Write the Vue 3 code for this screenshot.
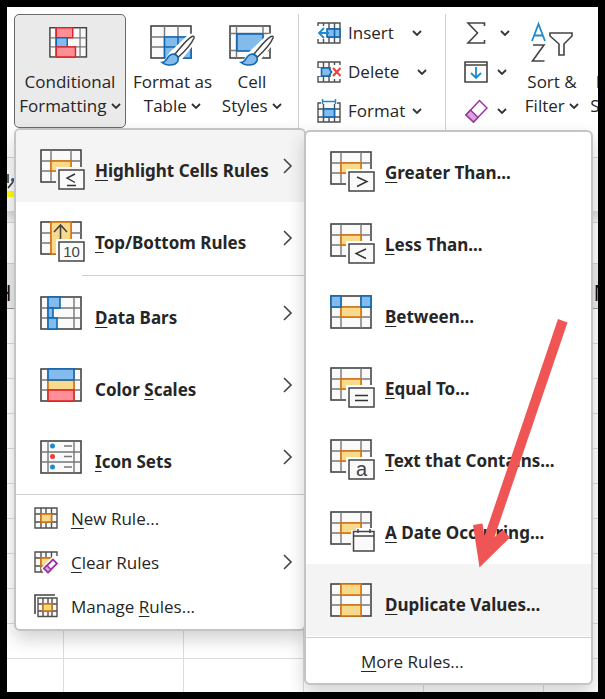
<template>
  <main class="window">
    <header class="ribbon">
      <button v-for="b in styleButtons" :key="b.icon" class="big-button" :class="[b.icon, { active: b.active }]">
        <svg width="46" height="42" viewBox="0 0 46 42">
          <g v-if="b.icon === 'conditional'">
            <rect x="1" y="1" width="40" height="32" class="frame" />
            <path d="M7.5 1V33M21 1V33M34 1V33M1 12H41M1 22H41" class="inner" />
            <path d="M8 13H27V21H8Z" fill="#fafafa" />
            <rect x="8" y="1" width="18" height="11" class="red" />
            <rect x="8" y="12" width="12" height="10" class="blue" />
            <rect x="8" y="22" width="21" height="11" class="red" />
          </g>
          <g v-else>
            <rect x="1" y="1" width="40" height="32" class="frame" />
            <template v-if="b.icon === 'table'">
              <path d="M14.5 1V33M28 1V33M1 12H41M1 22H41" class="inner" />
              <path d="M14.5 12H41V33H14.5Z" class="blue" />
              <path d="M28 12V33M14.5 22H41" class="blue" />
            </template>
            <template v-else>
              <path d="M7.5 1V33M34 1V33M1 8.5H41M1 25.5H41" class="inner" />
              <rect x="8" y="9" width="26" height="17" class="blue" />
            </template>
            <path d="M9 36L15 34L20 27L39 9L46 8V17L33 33L27 42H9Z" fill="#fff" />
            <path d="M25 29C31 22 37 14 42 11.5Q44.5 10.5 44 13C41 20 34 27 28.5 32Z" fill="#fff" stroke="#444" stroke-width="1.5" />
            <path d="M12 37.5C18 37 16 30 23 29C29 30 30 36 25 39C21 41 15 40 12 37.5Z" class="blue" />
          </g>
        </svg>
        <span>{{ b.top }}</span>
        <span>{{ b.bottom }} <svg class="drop" width="10" height="6" viewBox="0 0 10 6"><path d="M1 1L5 5L9 1" /></svg></span>
      </button>

      <div class="separator"></div>

      <div class="stack cells">
        <button v-for="c in cellButtons" :key="c" class="small-button" :class="c.toLowerCase()">
          <svg width="24" height="24" viewBox="0 0 24 24">
            <path v-if="c !== 'Format'" d="M1 2H23V22H1ZM6.5 2V22M12 2V22M17.5 2V22M1 8H23M1 16H23" class="tiny" />
            <template v-if="c === 'Insert'">
              <path d="M0 5H10V18H0Z" fill="#fff" />
              <rect x="10" y="8" width="13" height="8" class="blue" />
              <path d="M17.5 8V16" class="blue" />
              <path d="M12 12H2M7 7L2 12L7 17" stroke="#1e8bcd" stroke-width="1.8" fill="none" />
            </template>
            <template v-if="c === 'Delete'">
              <path d="M14 5H24V19H14Z" fill="#fff" />
              <path d="M0 8H4V16H0Z" fill="#fff" />
              <path d="M4.5 8H12L14.5 12L12 16H4.5Z" class="blue" />
              <path d="M16 8L23.5 16M23.5 8L16 16" stroke="#ef3b3b" stroke-width="2" />
            </template>
            <template v-if="c === 'Format'">
              <path d="M4 4H1V23H23V4H20M6.5 5V23M17.5 5V23M1 10H23M1 18H23M12 18V23" class="tiny" />
              <rect x="6.5" y="10" width="11" height="8" class="blue" />
              <path d="M5.5 0V5M18.5 0V5M5.5 2.5H18.5" stroke="#1e8bcd" stroke-width="1.5" />
            </template>
          </svg>
          <span>{{ c }}</span>
          <svg class="drop" width="10" height="6" viewBox="0 0 10 6"><path d="M1 1L5 5L9 1" /></svg>
        </button>
      </div>

      <div class="separator"></div>

      <div class="stack editing">
        <button v-for="e in editButtons" :key="e" class="small-button" :class="e.toLowerCase()" :aria-label="e">
          <svg width="24" height="24" viewBox="0 0 24 24">
            <path v-if="e === 'AutoSum'" d="M20.5 5V2H4L13.5 12L4 22H20.5V19" class="line" />
            <template v-if="e === 'Fill'">
              <path d="M1 2H23V22H1ZM1 5H23" class="line" />
              <path d="M12 7V18M7 13L12 18L17 13" stroke="#1e8bcd" stroke-width="1.8" fill="none" />
            </template>
            <template v-if="e === 'Clear'">
              <path d="M2 16L15.5 1.5L23 9L9.5 23Z" fill="#fff" stroke="#9a33a0" stroke-width="1.5" />
              <path d="M2 16L6.5 11L14 18.5L9.5 23Z" fill="#d9a3dc" stroke="#9a33a0" stroke-width="1.5" />
            </template>
          </svg>
          <svg class="drop" width="10" height="6" viewBox="0 0 10 6"><path d="M1 1L5 5L9 1" /></svg>
        </button>
      </div>

      <button class="big-button sort">
        <svg width="44" height="42" viewBox="0 0 44 42">
          <path d="M2 16L8.5 -1L15 16M4.5 10.5H12.5" stroke="#1e8bcd" stroke-width="1.8" fill="none" />
          <path d="M3 20H14L2.500 36H14.5" class="line" />
          <path d="M20 8H42V11L34 19V30H29V19L20 11Z" class="line" />
        </svg>
        <span>Sort &amp;</span>
        <span>Filter <svg class="drop" width="10" height="6" viewBox="0 0 10 6"><path d="M1 1L5 5L9 1" /></svg></span>
      </button>
      <button class="big-button find">
        <span>Find &amp;</span>
        <span>Select <svg class="drop" width="10" height="6" viewBox="0 0 10 6"><path d="M1 1L5 5L9 1" /></svg></span>
      </button>
    </header>

    <div class="ribbon-foot">
      <svg width="8" height="26" viewBox="0 0 8 26">
        <path d="M1 2V11M1 16L6 10" stroke="#333" stroke-width="1.5" />
        <circle cx="6" cy="8" r="2" fill="#1664ad" />
        <path d="M0 19H8V25H0Z" fill="#ff0" />
      </svg>
    </div>
    <div class="gap"></div>
    <div class="formula-bar"></div>

    <div class="sheet">
      <table>
        <thead>
          <tr><th v-for="col in columns" :key="col">{{ col }}</th></tr>
        </thead>
        <tbody>
          <tr v-for="row in 11" :key="row"><td v-for="col in columns" :key="col"></td></tr>
        </tbody>
      </table>
    </div>

    <nav class="menu main-menu">
      <template v-for="(item, i) in rules" :key="item.icon">
        <button class="rule" :class="{ hovered: i === 0 }">
          <svg class="rule-icon" width="46" height="42" viewBox="0 0 46 42">
            <rect x="1" y="1" width="40" height="32" class="frame" />
            <template v-if="i < 2">
              <path d="M11 1V33M31 1V33M1 12H41M1 22H41" class="inner" />
              <rect v-if="i === 0" x="11" y="12" width="20" height="10" class="gold" />
              <rect v-else x="11" y="1" width="20" height="32" class="gold" />
              <path v-if="i === 1" d="M20.5 20V4M14 11L20.5 4L27 11" class="line" />
              <rect x="16" y="18" width="30" height="24" :fill="i === 0 ? '#f4f4f4' : '#fff'" />
              <rect x="19" y="21" width="25" height="19" class="badge" />
              <path v-if="i === 0" d="M35 25L27 29L35 33.5M27 36.5H36" class="sign" />
              <text v-else x="31.500" y="36" text-anchor="middle" class="ten">10</text>
            </template>
            <template v-else>
              <path d="M8 1V33M34 1V33M1 12H41M1 22H41" class="inner" />
            </template>
            <template v-if="item.icon === 'bars'">
              <rect x="8" y="1" width="12" height="11" class="blue" />
              <rect x="8" y="12" width="5" height="10" class="blue" />
              <rect x="8" y="22" width="9" height="11" class="blue" />
            </template>
            <template v-if="item.icon === 'scales'">
              <rect x="8" y="12" width="26" height="10" class="gold" />
              <rect x="8" y="1" width="26" height="11" class="blue" />
              <rect x="8" y="22" width="26" height="11" class="red" />
            </template>
            <template v-if="item.icon === 'sets'">
              <circle cx="12.5" cy="6" r="2.5" fill="#1e8bcd" />
              <circle cx="12.5" cy="16.5" r="2.5" fill="#ef3b3b" />
              <circle cx="12.5" cy="27" r="2.5" fill="#1e8bcd" />
              <path d="M24 6H32M24 16.5H32M24 27H32" class="inner" />
            </template>
          </svg>
          <span class="rule-label">{{ item.label[0] }}<u>{{ item.label[1] }}</u>{{ item.label[2] }}</span>
          <svg class="more" width="10" height="16" viewBox="0 0 10 16"><path d="M1 1L8 8L1 15" /></svg>
        </button>
        <hr v-if="i === 1" class="inset">
      </template>
      <hr>
      <div class="commands">
        <button v-for="cmd in commands" :key="cmd.icon" class="command">
          <svg width="24" height="24" viewBox="0 0 24 24">
            <template v-if="cmd.icon !== 'manage'">
              <path d="M1 2H23V22H1ZM7 2V22M12 2V22M17.5 2V22M1 8H23M1 16H23" class="tiny" />
              <rect x="7" y="8" width="10.5" height="8" class="gold" />
            </template>
            <template v-if="cmd.icon === 'clear'">
              <path d="M7 18L19 6H24V24H10Z" fill="#fff" />
              <path d="M10 18.5L19 9.5L23 13.5L14 22.5Z" fill="#fff" stroke="#9a33a0" stroke-width="1.8" />
              <path d="M10 18.5L13 15.5L17 19.5L14 22.5Z" fill="#d9a3dc" stroke="#9a33a0" stroke-width="1.5" />
            </template>
            <template v-if="cmd.icon === 'manage'">
              <path d="M1 20V1H21" class="line" />
              <path d="M4 4H23V22.5H4ZM9 4V22M14 4V22M18 4V22M4 10H23M4 17H23" class="tiny" />
              <rect x="9" y="10" width="9" height="7" class="gold" />
            </template>
          </svg>
          <span>{{ cmd.label[0] }}<u>{{ cmd.label[1] }}</u>{{ cmd.label[2] }}</span>
          <svg v-if="cmd.icon === 'clear'" class="more" width="10" height="16" viewBox="0 0 10 16"><path d="M1 1L8 8L1 15" /></svg>
        </button>
      </div>
    </nav>

    <nav class="menu sub-menu">
      <button v-for="item in highlightRules" :key="item.icon" class="rule" :class="{ hovered: item.icon === 'duplicate' }">
        <svg class="rule-icon" width="46" height="42" viewBox="0 0 46 42">
          <rect x="1" y="1" width="40" height="32" class="frame" />
          <path d="M11 1V33M31 1V33M1 12H41M1 22H41" class="inner" />
          <template v-if="item.icon === 'duplicate'">
            <rect x="11" y="1" width="20" height="11" class="gold" />
            <rect x="11" y="22" width="20" height="11" class="gold" />
          </template>
          <rect v-else x="11" y="12" width="20" height="10" class="gold" />
          <template v-if="item.icon === 'between'">
            <rect x="1" y="1" width="10" height="11" class="blue" />
            <rect x="31" y="1" width="10" height="11" class="blue" />
          </template>
          <template v-if="item.sign || item.icon === 'text'">
            <rect x="16" y="18" width="30" height="24" fill="#fff" />
            <rect x="19" y="21" width="25" height="19" class="badge" />
            <path v-if="item.sign" :d="item.sign" class="sign" />
            <text v-else x="31.5" y="37" text-anchor="middle" class="letter">a</text>
          </template>
          <template v-if="item.icon === 'date'">
            <path d="M21 19H26V17H42V19H46V42H21Z" fill="#fff" />
            <path d="M23.5 20.5H44V40H23.5ZM23.5 25H44M28 18V22M40 18V22" class="badge" />
          </template>
        </svg>
        <span class="rule-label"><u>{{ item.label[0] }}</u>{{ item.label[1] }}</span>
      </button>
      <hr>
      <button class="command last"><span><u>M</u>ore Rules...</span></button>
    </nav>

    <svg class="pointer" width="95" height="250" viewBox="0 0 95 250">
      <path d="M86 1L95.5 4.5L22.5 219L31 212L38 219.5L7.5 249.5L1 207L10.5 205.500L12.5 218Z" fill="#f05555" />
    </svg>
  </main>
</template>

<script setup>
const styleButtons = [
  { icon: 'conditional', top: 'Conditional', bottom: 'Formatting', active: true },
  { icon: 'table', top: 'Format as', bottom: 'Table' },
  { icon: 'styles', top: 'Cell', bottom: 'Styles' }
]

const cellButtons = ['Insert', 'Delete', 'Format']
const editButtons = ['AutoSum', 'Fill', 'Clear']
const columns = ['H', 'I', 'J', 'K', 'L', 'M']

// label = text before the access key, the key itself, text after it
const rules = [
  { icon: 'highlight', label: ['', 'H', 'ighlight Cells Rules'] },
  { icon: 'top', label: ['', 'T', 'op/Bottom Rules'] },
  { icon: 'bars', label: ['', 'D', 'ata Bars'] },
  { icon: 'scales', label: ['Color ', 'S', 'cales'] },
  { icon: 'sets', label: ['', 'I', 'con Sets'] }
]

const commands = [
  { icon: 'new', label: ['', 'N', 'ew Rule...'] },
  { icon: 'clear', label: ['', 'C', 'lear Rules'] },
  { icon: 'manage', label: ['Manage ', 'R', 'ules...'] }
]

const highlightRules = [
  { icon: 'greater', label: ['G', 'reater Than...'], sign: 'M27 26L37 30.5L27 35.5' },
  { icon: 'less', label: ['L', 'ess Than...'], sign: 'M36 26L26 30.5L36 35.5' },
  { icon: 'between', label: ['B', 'etween...'] },
  { icon: 'equal', label: ['E', 'qual To...'], sign: 'M25 28.5H38M25 33.5H38' },
  { icon: 'text', label: ['T', 'ext that Contains...'] },
  { icon: 'date', label: ['A', ' Date Occurring...'] },
  { icon: 'duplicate', label: ['D', 'uplicate Values...'] }
]
</script>

<style>
body {
  margin: 0;
  background: #000;
}
</style>

<style scoped>
.window {
  position: relative;
  display: flex;
  flex-direction: column;
  box-sizing: border-box;
  min-height: 100vh;
  border: 7px solid #000;
  background: #fff;
  overflow: hidden;
  font-family: "Open Sans", "Noto Sans", sans-serif;
  font-size: 17px;
  color: #262626;
}

button {
  padding: 0;
  border: 0;
  background: none;
  font: inherit;
  color: inherit;
  cursor: pointer;
}

svg {
  flex-shrink: 0;
}

.ribbon {
  display: flex;
  align-items: flex-start;
  box-sizing: border-box;
  height: 151px;
  padding: 7px 0 0 7px;
  border-bottom: 1px solid #d4d4d4;
  overflow: hidden;
}

.big-button {
  display: flex;
  flex-direction: column;
  align-items: center;
  flex-shrink: 0;
  box-sizing: border-box;
  width: 90px;
  height: 114px;
  padding-top: 11px;
  line-height: 24px;
  white-space: nowrap;
}

.big-button > svg {
  margin-bottom: 3px;
  overflow: visible;
}

.big-button.conditional > svg {
  width: 42px;
}

.big-button.conditional {
  width: 112px;
}

.big-button.table {
  padding-left: 3px;
}

.big-button.active {
  padding-top: 10px;
  border: 1px solid #6a6a6a;
  border-radius: 5px;
  background: #eaeaea;
}

.big-button.styles {
  width: 72px;
}

.big-button.sort {
  width: 62px;
}

.big-button.find {
  width: 76px;
  padding-top: 56px;
}

.drop {
  fill: none;
  stroke: #333;
  stroke-width: 1.8;
}

.big-button .drop {
  vertical-align: 3px;
}

.separator {
  flex-shrink: 0;
  width: 1px;
  height: 122px;
  background: #d0d0d0;
}

.styles + .separator {
  margin-left: 10px;
}

.stack {
  display: flex;
  flex-direction: column;
  flex-shrink: 0;
}

.cells {
  width: 128px;
  padding-left: 18px;
}

.editing {
  width: 57px;
  padding-left: 18px;
}

.small-button {
  display: flex;
  align-items: center;
  box-sizing: border-box;
  height: 39px;
  padding-bottom: 2px;
  gap: 7px;
}

.insert .drop,
.delete .drop {
  margin-left: 11px;
}

.editing .small-button {
  gap: 9px;
}

.editing .autosum {
  gap: 12px;
}

.ribbon-foot {
  height: 53px;
  padding-top: 14px;
  box-sizing: border-box;
  background: #fafafa;
}

.gap {
  box-sizing: border-box;
  height: 12px;
  border-bottom: 1px solid #d4d4d4;
  background: linear-gradient(#d8d8d8, #f4f4f4);
}

.formula-bar {
  height: 40px;
  background: #fff;
}

.sheet {
  flex: 1 1 0;
  overflow: hidden;
}

table {
  width: 720px;
  margin-left: -63px;
  border-collapse: separate;
  border-spacing: 0;
  table-layout: fixed;
}

th {
  box-sizing: border-box;
  height: 46px;
  padding: 12px 0 0;
  border-top: 1px solid #d4d4d4;
  border-right: 1px solid #d4d4d4;
  border-bottom: 1px solid #999;
  background: #ececec;
  font-size: 22px;
  font-weight: 400;
  line-height: 30px;
  color: #111;
}

td {
  box-sizing: border-box;
  height: 35px;
  padding: 0;
  border-right: 1px solid #dcdcdc;
  border-bottom: 1px solid #dcdcdc;
}

.menu {
  position: absolute;
  box-sizing: border-box;
  border: 2px solid #c4c4c4;
  border-radius: 6px;
  background: #fff;
  box-shadow: 0 8px 18px rgba(0, 0, 0, 0.18);
  overflow: hidden;
}

.main-menu {
  top: 121px;
  left: 7px;
  width: 292px;
}

.sub-menu {
  top: 123px;
  left: 297px;
  width: 289px;
}

.menu button {
  display: flex;
  align-items: center;
  width: 100%;
  text-align: left;
  white-space: nowrap;
}

.menu .rule {
  height: 72px;
  padding: 0 11px 0 24px;
  font-family: "Noto Sans", "Open Sans", sans-serif;
  font-weight: 700;
}

.rule.hovered {
  background: #f4f4f4;
}

.rule-icon,
.rule-label {
  margin-top: 8px;
}

.rule-icon {
  margin-right: 9px;
}

.more {
  margin-left: auto;
  fill: none;
  stroke: #444;
  stroke-width: 1.6;
}

u {
  text-decoration-thickness: 1px;
  text-underline-offset: 3px;
}

hr {
  height: 1px;
  margin: 1px 0;
  border: 0;
  background: #cfcfcf;
}

hr.inset {
  margin-left: 66px;
}

.commands {
  padding-bottom: 1px;
}

.command {
  height: 44px;
  padding: 0 11px 0 18px;
  gap: 13px;
}

.command.last {
  padding-left: 55px;
}

.frame {
  fill: #fafafa;
  stroke: #444;
  stroke-width: 1.6;
}

.inner {
  fill: none;
  stroke: #777;
  stroke-width: 1.4;
}

.tiny {
  fill: #fafafa;
  stroke: #505050;
  stroke-width: 1.4;
}

.line {
  fill: none;
  stroke: #444;
  stroke-width: 1.6;
}

.badge {
  fill: #fafafa;
  stroke: #444;
  stroke-width: 1.5;
}

.sign {
  fill: none;
  stroke: #333;
  stroke-width: 1.4;
}

.ten,
.letter {
  font-family: "Liberation Sans", sans-serif;
  font-weight: 400;
  fill: #444;
}

.ten {
  font-size: 15px;
}

.letter {
  font-size: 20px;
}

.blue {
  fill: #83bbec;
  stroke: #0f68b5;
  stroke-width: 1.6;
}

.red {
  fill: #ff8f96;
  stroke: #dc2626;
  stroke-width: 1.6;
}

.gold {
  fill: #f8da8c;
  stroke: #dd730c;
  stroke-width: 1.6;
}

.pointer {
  position: absolute;
  top: 311px;
  left: 465px;
  overflow: visible;
  pointer-events: none;
}
</style>
